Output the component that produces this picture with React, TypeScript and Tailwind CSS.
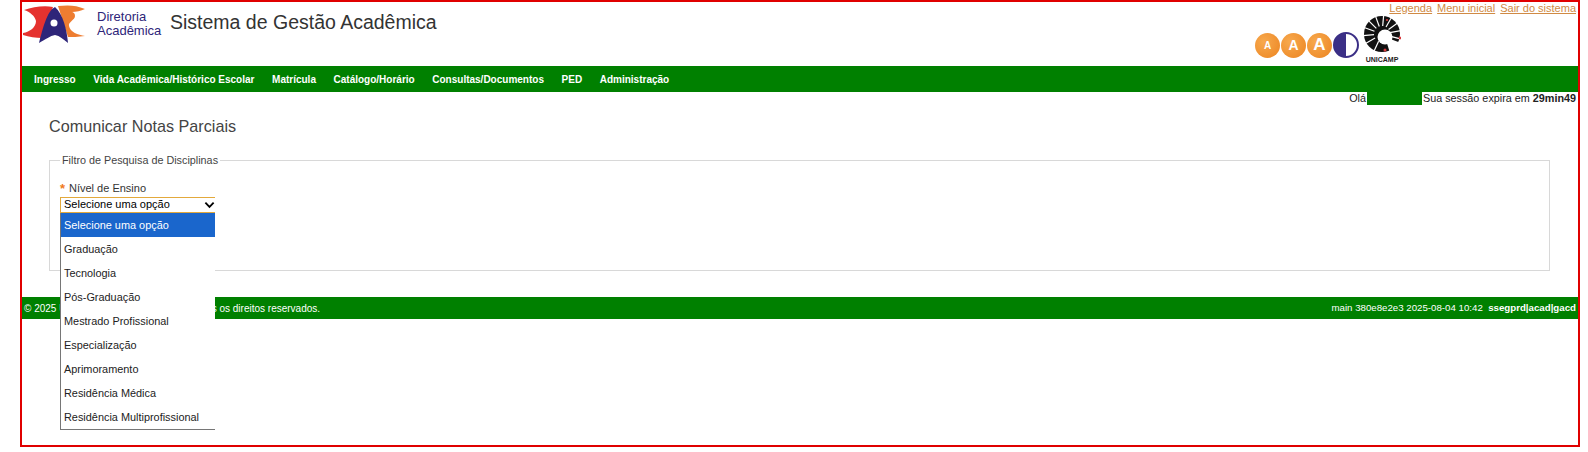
const menu = [
  "Ingresso",
  "Vida Acadêmica/Histórico Escolar",
  "Matrícula",
  "Catálogo/Horário",
  "Consultas/Documentos",
  "PED",
  "Administração",
];

const options = [
  "Graduação",
  "Tecnologia",
  "Pós-Graduação",
  "Mestrado Profissional",
  "Especialização",
  "Aprimoramento",
  "Residência Médica",
  "Residência Multiprofissional",
];

function DaLogo() {
  return (
    <svg width="66" height="42" viewBox="22 4 66 42" className="shrink-0">
      <path d="M24 10C33 7 44 5 53 7L42 38C36 38 29 37 23 35L23 33C30 32 36 27 36 21C35 16 30 12 24 10Z" fill="#e5322f" />
      <path d="M85 9C76 5 68 5 58 6L68 37C72 37 78 37 85 36C78 35 70 32 69 26C68 22 75 20 75 16C75 13 73 12 72 12C76 12 81 11 85 9Z" fill="#ee7d31" />
      <path d="M55 7C47 11 43 28 39 43C46 39 50 36 55 35C60 36 63 39 68 43C67 30 63 14 55 7Z" fill="#2e2579" />
      <circle cx="54" cy="23" r="3.5" fill="#fff" />
    </svg>
  );
}

function UnicampLogo() {
  const angles = [200, 225, 250, 275, 300, 325, 350, 15, 115, 150, 175];
  return (
    <div className="flex flex-col items-center w-[38px]">
      <svg width="38" height="38" viewBox="-19 -19 38 38">
        <circle r="18" fill="#111" />
        {angles.map((a) => (
          <line
            key={a}
            x1={Math.cos((a * Math.PI) / 180) * 8}
            y1={Math.sin((a * Math.PI) / 180) * 8}
            x2={Math.cos((a * Math.PI) / 180) * 19}
            y2={Math.sin((a * Math.PI) / 180) * 19}
            stroke="#fff"
            strokeWidth="1.2"
          />
        ))}
        <circle cx="3" cy="3" r="7.5" fill="#fff" />
        <path d="M3 3L19 9L8 19Z" fill="#fff" />
        <circle cx="18" cy="4" r="1.4" fill="#d8393c" />
        <circle cx="3" cy="16" r="1.5" fill="#d8393c" />
        <circle cx="5" cy="-14" r="1.1" fill="#d8393c" />
      </svg>
      <span className="mt-[3px] text-[7px] leading-[8px] font-bold text-[#222]">UNICAMP</span>
    </div>
  );
}

function Accessibility() {
  const circle =
    "w-[25px] h-[25px] rounded-full bg-[radial-gradient(circle_at_35%_35%,#f7a94e,#ec8420)] flex items-center justify-center text-white font-bold";
  return (
    <div className="flex items-center gap-px">
      <div className={circle + " text-[10px]"}>A</div>
      <div className={circle + " text-[14px]"}>A</div>
      <div className={circle + " text-[17px]"}>A</div>
      <svg width="26" height="26" viewBox="0 0 26 26">
        <circle cx="13" cy="13" r="12" fill="#fff" stroke="#3b2f86" strokeWidth="2" />
        <path d="M13 1A12 12 0 0 0 13 25Z" fill="#3b2f86" />
      </svg>
    </div>
  );
}

export default function App() {
  return (
    <div className="font-['Liberation_Sans',Arial,sans-serif] bg-white w-[1588px] h-[452px] pl-[20px] overflow-hidden">
      <div className="relative w-[1560px] h-[447px] border-2 border-[#e00000] flex flex-col">
        <header className="h-[64px] flex shrink-0">
          <div className="pt-[2px] h-fit">
            <DaLogo />
          </div>
          <div className="ml-[9px] mt-[8px] text-[13px] leading-[14px] text-[#2e2579] w-[73px]">
            Diretoria
            <br />
            Acadêmica
          </div>
          <div className="text-[19.5px] leading-[24px] mt-[8px] text-[#333]">Sistema de Gestão Acadêmica</div>
          <div className="ml-auto flex flex-col items-end">
            <div className="flex gap-[5px] pr-[2px] text-[11px] leading-[13px] text-[#d08a44] underline">
              <span>Legenda</span>
              <span>Menu inicial</span>
              <span>Sair do sistema</span>
            </div>
            <div className="flex items-end pr-[177px] gap-[4px]">
              <div className="pb-[6px]">
                <Accessibility />
              </div>
              <UnicampLogo />
            </div>
          </div>
        </header>

        <nav className="h-[26px] shrink-0 bg-[#008000] flex items-center gap-[17.6px] pl-[12px] text-[10px] font-bold text-white">
          {menu.map((m) => (
            <span key={m}>{m}</span>
          ))}
        </nav>

        <div className="flex justify-end items-center h-[13px] pr-[2px] text-[10.8px] text-[#222]">
          <span>Olá</span>
          <span className="w-[55px] h-[13px] mx-px bg-[#008000]" />
          <span>
            Sua sessão expira em <b>29min49</b>
          </span>
        </div>

        <h1 className="ml-[27px] mt-[11px] text-[16.2px] leading-[20px] font-normal text-[#444]">Comunicar Notas Parciais</h1>

        <fieldset className="ml-[27px] mt-[18px] w-[1501px] h-[117px] border border-[#d8d8d8] px-[10px] shrink-0">
          <legend className="px-[2px] text-[10.8px] leading-[13px] text-[#444]">Filtro de Pesquisa de Disciplinas</legend>
          <div className="mt-[15px] text-[11px] leading-[13px] text-[#333] flex">
            <span className="w-[9px] text-[#f07a20] font-bold text-[13px]">*</span>
            <span>Nível de Ensino</span>
          </div>
        </fieldset>

        <footer className="mt-[26px] h-[22px] shrink-0 bg-[#008000] flex items-center justify-between px-[2px] text-[10px] text-white">
          <span>© 2025 Univ. Estadual de Campinas. Todos os direitos reservados.</span>
          <span className="text-[9.7px]">
            main 380e8e2e3 2025-08-04 10:42 &nbsp;<b>ssegprd|acad|gacd</b>
          </span>
        </footer>

        <div className="absolute left-[38px] top-[195px] w-[155px] text-[11px] text-black">
          <div className="h-[16px] border border-r-0 border-[#e3a93c] flex items-center justify-between pl-[3px] pb-px">
            <span>Selecione uma opção</span>
            <svg width="11" height="8" viewBox="0 0 12 8">
              <path d="M1.5 1.5L6 6L10.5 1.5" fill="none" stroke="#000" strokeWidth="2" />
            </svg>
          </div>
          <div className="bg-white border-l border-b border-[#767676] text-[#222] text-[10.9px]">
            <div className="h-[24px] pl-[3px] flex items-center bg-[#1a66cc] text-white">Selecione uma opção</div>
            {options.map((o) => (
              <div key={o} className="h-[24px] pl-[3px] flex items-center">
                {o}
              </div>
            ))}
          </div>
        </div>
      </div>
    </div>
  );
}
